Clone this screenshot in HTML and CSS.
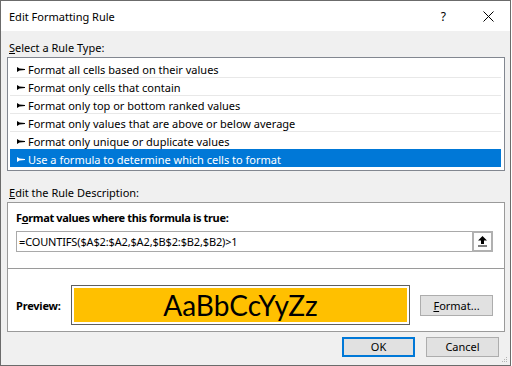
FILE: index.html
```html
<!DOCTYPE html>
<html lang="en">
<head>
    <meta charset="UTF-8">
    <title>Edit Formatting Rule</title>
    <link rel="stylesheet" href="styles.css">
</head>
<body>
    <div class="dialog">
        <div class="titlebar">
            <span class="title">Edit Formatting Rule</span>
            <span class="help">?</span>
            <svg class="close" width="11" height="11" viewBox="0 0 11 11">
                <path d="M0.5 0.5 L10.5 10.5 M10.5 0.5 L0.5 10.5" stroke="#000" stroke-width="1" fill="none"/>
            </svg>
        </div>
        <div class="content">
            <div class="label label-type"><u>S</u>elect a Rule Type:</div>
            <div class="rule-list">
                <div class="rule"><svg class="bullet" width="8" height="5" viewBox="0 0 8 5"><polygon points="0,0 2.5,1.6 8,2 8,3 2.5,3.4 0,5"/></svg>Format all cells based on their values</div>
                <div class="rule"><svg class="bullet" width="8" height="5" viewBox="0 0 8 5"><polygon points="0,0 2.5,1.6 8,2 8,3 2.5,3.4 0,5"/></svg>Format only cells that contain</div>
                <div class="rule"><svg class="bullet" width="8" height="5" viewBox="0 0 8 5"><polygon points="0,0 2.5,1.6 8,2 8,3 2.5,3.4 0,5"/></svg>Format only top or bottom ranked values</div>
                <div class="rule"><svg class="bullet" width="8" height="5" viewBox="0 0 8 5"><polygon points="0,0 2.5,1.6 8,2 8,3 2.5,3.4 0,5"/></svg>Format only values that are above or below average</div>
                <div class="rule"><svg class="bullet" width="8" height="5" viewBox="0 0 8 5"><polygon points="0,0 2.5,1.6 8,2 8,3 2.5,3.4 0,5"/></svg>Format only unique or duplicate values</div>
                <div class="rule selected"><svg class="bullet" width="8" height="5" viewBox="0 0 8 5"><polygon points="0,0 2.5,1.6 8,2 8,3 2.5,3.4 0,5"/></svg>Use a formula to determine which cells to format</div>
            </div>
            <div class="label label-desc"><u>E</u>dit the Rule Description:</div>
            <div class="desc">
                <div class="desc-top">
                    <div class="bold-label">F<u>o</u>rmat values where this formula is true:</div>
                    <div class="formula-row">
                        <div class="formula">=COUNTIFS($A$2:$A2,$A2,$B$2:$B2,$B2)&gt;1</div>
                        <div class="collapse-btn">
                            <svg width="9" height="11" viewBox="0 0 9 11">
                                <polygon points="4.5,0 9,4.5 6,4.5 6,8 3,8 3,4.5 0,4.5" fill="#000"/>
                                <rect x="0" y="9.5" width="9" height="1" fill="#000"/>
                            </svg>
                        </div>
                    </div>
                </div>
                <div class="desc-bottom">
                    <div class="preview-label">Preview:</div>
                    <div class="preview-box">
                        <div class="preview-fill">AaBbCcYyZz</div>
                    </div>
                    <div class="btn btn-format"><u>F</u>ormat...</div>
                </div>
            </div>
            <div class="actions">
                <div class="btn btn-ok">OK</div>
                <div class="btn">Cancel</div>
            </div>
        </div>
        <svg class="grip" width="6" height="6" viewBox="0 0 6 6">
            <rect x="4" y="0" width="1" height="1" fill="#b4b4b4"/>
            <rect x="2" y="2" width="1" height="1" fill="#b4b4b4"/>
            <rect x="4" y="2" width="1" height="1" fill="#b4b4b4"/>
            <rect x="0" y="4" width="1" height="1" fill="#b4b4b4"/>
            <rect x="2" y="4" width="1" height="1" fill="#b4b4b4"/>
            <rect x="4" y="4" width="1" height="1" fill="#b4b4b4"/>
        </svg>
    </div>
</body>
</html>
```

FILE: styles.css
```css
body {
    margin: 0;
    padding: 0;
    background: #fff;
    font-family: "Noto Sans", "DejaVu Sans", sans-serif;
    font-size: 11px;
    color: #000;
}
.dialog {
    position: relative;
    width: 511px;
    height: 366px;
    box-sizing: border-box;
    border: 1px solid #6b6b6b;
    background: #f0f0f0;
}
.titlebar {
    display: flex;
    align-items: center;
    height: 30px;
    background: #fff;
    padding-left: 8px;
}
.title {
    flex: 1;
    font-size: 11px;
}
.help {
    font-size: 12px;
    margin-right: 37px;
}
.close {
    margin-right: 16px;
}
.content {
    padding: 0 5px 0 6px;
}
.label {
    line-height: 16px;
    padding-left: 2px;
}
.label-type {
    padding-top: 9px;
    margin-bottom: 1px;
}
.label-desc {
    margin-top: 14px;
    margin-bottom: 1px;
}
.rule-list {
    height: 114px;
    box-sizing: border-box;
    border: 1px solid #828790;
    background: #fff;
    padding: 1px 3px 3px 2px;
}
.rule {
    display: flex;
    align-items: flex-start;
    height: 18px;
    box-sizing: border-box;
    border-top: 1px solid #e8e8e8;
    padding: 2px 0 0 7px;
    line-height: 15px;
}
.rule:first-child {
    border-top-color: transparent;
}
.bullet {
    fill: #000;
    margin: 5px 3px 0 0;
}
.rule.selected {
    background: #0078d7;
    border-top-color: #0078d7;
    color: #fff;
}
.rule.selected .bullet {
    fill: #fff;
}
.desc {
    border: 1px solid #9a9a9a;
    background: #fff;
}
.desc-top {
    padding: 7px 11px 16px 8px;
    border-bottom: 1px solid #9a9a9a;
}
.bold-label {
    font-weight: bold;
    letter-spacing: -0.35px;
    line-height: 16px;
    margin-bottom: 5px;
}
.formula-row {
    display: flex;
    height: 21px;
}
.formula {
    flex: 1;
    border: 1px solid #a9a9a9;
    border-right: none;
    line-height: 19px;
    padding-left: 2px;
    letter-spacing: -0.15px;
    white-space: nowrap;
}
.collapse-btn {
    width: 21px;
    box-sizing: border-box;
    border: 2px solid #b0b0b0;
    background: #fdfdfd;
    display: flex;
    align-items: center;
    justify-content: center;
}
.desc-bottom {
    display: flex;
    align-items: center;
    padding: 16px 0 6px 8px;
}
.preview-label {
    width: 55px;
    font-weight: bold;
    letter-spacing: -0.2px;
}
.preview-box {
    width: 339px;
    height: 40px;
    box-sizing: border-box;
    border: 1px solid #5f5f5f;
    padding: 2px;
}
.preview-fill {
    height: 34px;
    background: #ffc000;
    text-align: center;
    font-family: Lato, "Liberation Sans", sans-serif;
    font-size: 28px;
    line-height: 34px;
}
.btn {
    width: 73px;
    height: 20px;
    box-sizing: border-box;
    border: 1px solid #adadad;
    background: #e1e1e1;
    text-align: center;
    line-height: 18px;
}
.btn-format {
    height: 21px;
    line-height: 19px;
    margin-left: 10px;
}
.actions {
    display: flex;
    justify-content: flex-end;
    gap: 11px;
    margin-top: 5px;
    padding-right: 6px;
}
.btn-ok {
    border-color: #0078d7;
    box-shadow: inset 0 0 0 1px #0078d7;
}
.grip {
    position: absolute;
    right: 2px;
    bottom: 2px;
}
```
